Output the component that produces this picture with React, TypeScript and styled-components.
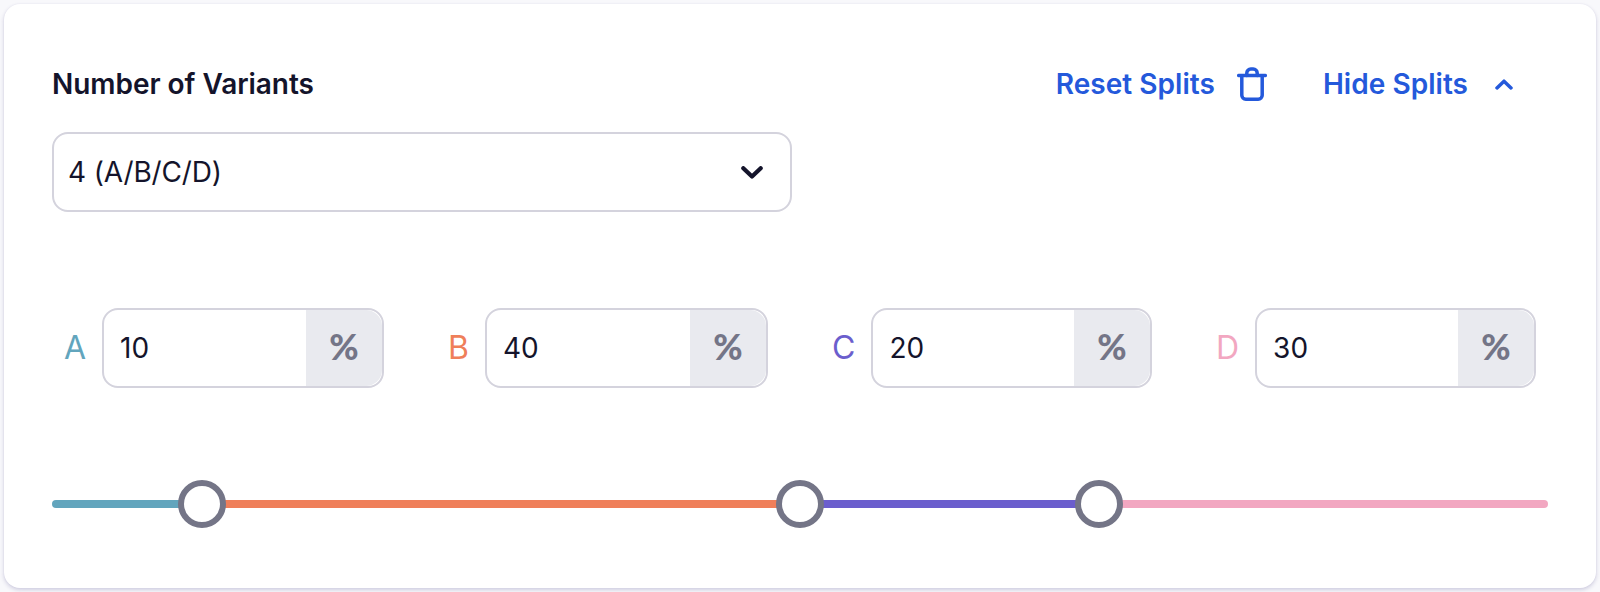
import React from "react";
import styled, { createGlobalStyle } from "styled-components";

const GlobalStyle = createGlobalStyle`
  *, *::before, *::after { box-sizing: border-box; }
  body {
    margin: 0;
    background: #f8f8fb;
    font-family: Inter, "Liberation Sans", sans-serif;
    color: #14142b;
    -webkit-font-smoothing: antialiased;
  }
`;

const Page = styled.main`
  padding: 4px;
  height: 592px;
  overflow: hidden;
`;

const Card = styled.section`
  display: flex;
  flex-direction: column;
  height: 584px;
  padding: 60px 48px 0;
  border-radius: 16px;
  background: #fff;
  box-shadow: 0 2px 4px rgba(50, 40, 120, 0.2), 0 0 2px rgba(50, 40, 120, 0.06);
`;

const Header = styled.header`
  display: flex;
  align-items: center;
  justify-content: space-between;
  height: 40px;
  padding-right: 35px;
`;

const Title = styled.h2`
  margin: 0;
  font-size: 28px;
  font-weight: 600;
  line-height: 41px;
  letter-spacing: -0.04px;
`;

const Actions = styled.div`
  display: flex;
  gap: 56px;
`;

const LinkButton = styled.button<{ $gap: number }>`
  display: flex;
  align-items: center;
  gap: ${(p) => p.$gap}px;
  padding: 0;
  border: 0;
  background: none;
  color: #2459db;
  font: inherit;
  font-size: 28px;
  font-weight: 600;
  line-height: 41px;
  letter-spacing: 0.04px;
  cursor: pointer;

  svg { display: block; }
`;

const Select = styled.div`
  display: flex;
  align-items: center;
  justify-content: space-between;
  width: 740px;
  height: 80px;
  margin-top: 28px;
  padding: 0 27px 0 14px;
  border: 2px solid #d4d3dd;
  border-radius: 16px;
  font-size: 28px;
  line-height: 40px;
  letter-spacing: -0.15px;

  svg { display: block; }
`;

const Splits = styled.div`
  display: grid;
  grid-template-columns: repeat(4, 320px);
  column-gap: 64px;
  margin: 96px 0 0 12px;
`;

const Split = styled.label`
  display: flex;
  align-items: center;
  gap: 16px;
  height: 80px;
`;

const Letter = styled.span<{ $color: string }>`
  color: ${(p) => p.$color};
  font-size: 32px;
  line-height: 40px;
`;

const Field = styled.span`
  display: flex;
  flex: 1;
  height: 80px;
  border: 2px solid #d4d3dd;
  border-radius: 16px;
`;

const Value = styled.span`
  flex: 1;
  padding-left: 16px;
  font-size: 28px;
  line-height: 76px;
`;

const Unit = styled.span`
  width: 76px;
  border-radius: 0 16px 16px 0;
  background: #e9eaef;
  color: #747587;
  font-family: Lato, Inter, sans-serif;
  font-size: 35.5px;
  font-weight: 900;
  line-height: 73px;
  text-align: center;
`;

const Slider = styled.div`
  position: relative;
  display: flex;
  height: 8px;
  margin-top: 112px;
  border-radius: 4px;
`;

const Segment = styled.div<{ $color: string }>`
  background: ${(p) => p.$color};

  &:first-child { border-radius: 4px 0 0 4px; }
  &:nth-child(4) { border-radius: 0 4px 4px 0; }
`;

const Handle = styled.span`
  position: absolute;
  top: -20px;
  width: 48px;
  height: 48px;
  margin-left: -24px;
  border: 6px solid #747587;
  border-radius: 50%;
  background: #fff;
`;

const TrashIcon = () => (
  <svg width="30" height="34" viewBox="0 0 30 34" fill="none" stroke="currentColor" strokeWidth="3.5" strokeLinecap="round" strokeLinejoin="round">
    <path d="M1.7 8.5H28.3" />
    <path d="M9.8 8.4V6a4 4 0 0 1 4-4h2.4a4 4 0 0 1 4 4v2.4" />
    <path d="M4.8 9v19.2a4 4 0 0 0 4 4h12.4a4 4 0 0 0 4-4V9" />
  </svg>
);

const ChevronUpIcon = () => (
  <svg width="18" height="11" viewBox="0 0 18 11" fill="none" stroke="currentColor" strokeWidth="3.5" strokeLinecap="round" strokeLinejoin="round">
    <path d="M2 8.9 9 2.2l7 6.7" />
  </svg>
);

const ChevronDownIcon = () => (
  <svg width="22" height="13" viewBox="0 0 22 13" fill="none" stroke="currentColor" strokeWidth="4.2" strokeLinecap="round" strokeLinejoin="round">
    <path d="M2.3 2.2 11 10.6l8.7-8.4" />
  </svg>
);

const variants = [
  { name: "A", share: 10, color: "#62a5bd" },
  { name: "B", share: 40, color: "#ef7f5a" },
  { name: "C", share: 20, color: "#6b5ecd" },
  { name: "D", share: 30, color: "#f2a7c1" },
];

const stops = variants
  .slice(0, -1)
  .map((_, i) => variants.slice(0, i + 1).reduce((sum, v) => sum + v.share, 0));

export default function App() {
  return (
    <Page>
      <GlobalStyle />
      <Card>
        <Header>
          <Title>Number of Variants</Title>
          <Actions>
            <LinkButton $gap={22}>
              Reset Splits
              <TrashIcon />
            </LinkButton>
            <LinkButton $gap={27}>
              Hide Splits
              <ChevronUpIcon />
            </LinkButton>
          </Actions>
        </Header>
        <Select>
          4 (A/B/C/D)
          <ChevronDownIcon />
        </Select>
        <Splits>
          {variants.map((v) => (
            <Split key={v.name}>
              <Letter $color={v.color}>{v.name}</Letter>
              <Field>
                <Value>{v.share}</Value>
                <Unit>%</Unit>
              </Field>
            </Split>
          ))}
        </Splits>
        <Slider>
          {variants.map((v) => (
            <Segment key={v.name} $color={v.color} style={{ width: `${v.share}%` }} />
          ))}
          {stops.map((stop) => (
            <Handle key={stop} style={{ left: `${stop}%` }} />
          ))}
        </Slider>
      </Card>
    </Page>
  );
}
